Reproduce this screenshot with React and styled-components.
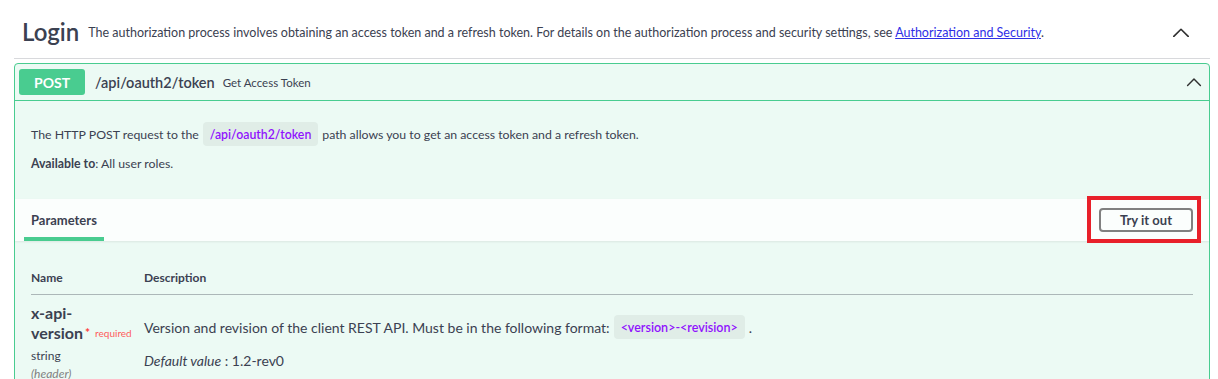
import React from "react";
import styled, { createGlobalStyle } from "styled-components";

const Global = createGlobalStyle`
  html, body { margin: 0; padding: 0; background: #fff; }
  body { font-family: Lato, "Noto Sans", sans-serif; color: #3b4151; }
  * { box-sizing: border-box; }
`;

const Section = styled.section`
  padding: 0 8px 0 14px;
`;

const TagHeader = styled.div`
  display: flex;
  align-items: center;
  padding: 15px 20px 9px 8px;
  border-bottom: 1px solid rgba(59, 65, 81, 0.2);
`;

const TagTitle = styled.h3`
  margin: 0;
  font-size: 24px;
  line-height: 34px;
  font-weight: 600;
  color: #3b4151;
`;

const TagDesc = styled.small`
  flex: 1;
  margin-left: 9px;
  font-size: 12.5px;
  color: #3b4151;
  white-space: nowrap;
  a { color: #2f2fe6; text-decoration: underline; }
`;

const Chevron = ({ size = 16 }) => (
  <svg width={size} height={size * 0.6} viewBox="0 0 20 12" fill="none">
    <path d="M2 10.5 L10 2.5 L18 10.5" stroke="#303030" strokeWidth="1.8" strokeLinecap="round" strokeLinejoin="round" />
  </svg>
);

const Opblock = styled.div`
  margin-top: 4px;
  border: 1px solid #49cc90;
  border-radius: 4px;
  background: rgba(73, 204, 144, 0.1);
`;

const Summary = styled.div`
  display: flex;
  align-items: center;
  padding: 5px 4px;
  border-bottom: 1px solid #49cc90;
`;

const Method = styled.span`
  display: inline-flex;
  align-items: center;
  justify-content: center;
  width: 66px;
  height: 26px;
  border-radius: 3px;
  background: #49cc90;
  color: #fff;
  font-size: 14px;
  font-weight: 700;
`;

const Path = styled.span`
  margin-left: 10px;
  font-size: 14.5px;
  font-weight: 600;
  color: #3b4151;
`;

const SummaryDesc = styled.span`
  flex: 1;
  margin-left: 8px;
  font-size: 11.5px;
  color: #3b4151;
`;

const SummaryArrow = styled.span`
  display: flex;
  margin-right: 3px;
`;

const Body = styled.div`
  padding: 21px 16px 27px;
  font-size: 12.3px;
`;

const Line = styled.p`
  margin: 0;
  display: flex;
  align-items: center;
  min-height: ${(p) => (p.$tall ? "24px" : "18px")};
  margin-top: ${(p) => (p.$gap ? "8px" : "0")};
  b { font-weight: 700; }
`;

const Code = styled.code`
  display: inline-flex;
  align-items: center;
  height: 24px;
  padding: 0 7px;
  margin: 0 4px;
  border-radius: 4px;
  background: rgba(0, 0, 0, 0.05);
  color: #9012fe;
  font-family: inherit;
  font-weight: 600;
  font-size: ${(p) => p.$size || "12.3px"};
`;

const ParamsHeader = styled.div`
  position: relative;
  display: flex;
  align-items: center;
  justify-content: space-between;
  height: 42px;
  padding: 0 16px 0 9px;
  background: rgba(255, 255, 255, 0.8);
  box-shadow: 0 1px 2px rgba(0, 0, 0, 0.08);
`;

const Tab = styled.div`
  align-self: stretch;
  display: flex;
  align-items: center;
  padding: 4px 7px 0;
  font-size: 13px;
  font-weight: 700;
  border-bottom: 4px solid #49cc90;
`;

const TryButton = styled.button`
  width: 94px;
  height: 24px;
  border: 2px solid #808080;
  border-radius: 4px;
  background: transparent;
  color: #3b4151;
  font-family: inherit;
  font-size: 13px;
  font-weight: 700;
  cursor: pointer;
`;

/* red annotation frame laid over the "Try it out" button */
const Highlight = styled.span`
  position: absolute;
  z-index: 2;
  top: -3px;
  right: 8px;
  width: 114px;
  height: 47px;
  border: 4px solid #e8202a;
  pointer-events: none;
`;

const TableWrap = styled.div`
  padding: 29px 16px 0;
`;

const Table = styled.table`
  width: 100%;
  border-collapse: collapse;
  th {
    text-align: left;
    font-size: 12px;
    font-weight: 700;
    padding: 0 0 9px;
    border-bottom: 1px solid rgba(59, 65, 81, 0.2);
  }
  td { vertical-align: top; padding: 0; }
`;

const NameCell = styled.td`
  width: 113px;
  padding-top: 8px !important;
`;

const ParamName = styled.div`
  font-size: 16px;
  font-weight: 700;
  line-height: 20px;
  span {
    font-size: 10px;
    font-weight: 400;
    color: #ff5b5b;
    margin-left: 2px;
    vertical-align: 2px;
  }
  span b { color: #ff3b3b; font-size: 12px; margin-right: 5px; }
`;

const ParamType = styled.div`
  font-size: 12px;
  line-height: 18px;
  margin-top: 4px;
`;

const ParamIn = styled.div`
  font-size: 12px;
  font-style: italic;
  color: #808080;
  line-height: 18px;
`;

const DescCell = styled.td`
  padding-top: 20px !important;
  font-size: 14px;
`;

const Default = styled.div`
  margin-top: 13px;
  i { font-style: italic; }
`;

export default function App() {
  return (
    <>
      <Global />
      <Section>
        <TagHeader>
          <TagTitle>Login</TagTitle>
          <TagDesc>
            The authorization process involves obtaining an access token and a refresh token. For details on the
            authorization process and security settings, see <a href="#">Authorization and Security</a>.
          </TagDesc>
          <Chevron size={18} />
        </TagHeader>
        <Opblock>
          <Summary>
            <Method>POST</Method>
            <Path>/api/oauth2/token</Path>
            <SummaryDesc>Get Access Token</SummaryDesc>
            <SummaryArrow>
              <Chevron size={16} />
            </SummaryArrow>
          </Summary>
          <Body>
            <Line $tall>
              The HTTP POST request to the <Code>/api/oauth2/token</Code> path allows you to get an access token and a
              refresh token.
            </Line>
            <Line $gap>
              <b>Available to</b>: All user roles.
            </Line>
          </Body>
          <ParamsHeader>
            <Tab>Parameters</Tab>
            <TryButton>Try it out</TryButton>
            <Highlight />
          </ParamsHeader>
          <TableWrap>
            <Table>
              <thead>
                <tr>
                  <th>Name</th>
                  <th>Description</th>
                </tr>
              </thead>
              <tbody>
                <tr>
                  <NameCell>
                    <ParamName>
                      x-api-version
                      <span>
                        <b>*</b>required
                      </span>
                    </ParamName>
                    <ParamType>string</ParamType>
                    <ParamIn>(header)</ParamIn>
                  </NameCell>
                  <DescCell>
                    <Line $tall>
                      Version and revision of the client REST API. Must be in the following format:
                      <Code $size="12.5px">&lt;version&gt;-&lt;revision&gt;</Code>.
                    </Line>
                    <Default>
                      <i>Default value</i> : 1.2-rev0
                    </Default>
                  </DescCell>
                </tr>
              </tbody>
            </Table>
          </TableWrap>
        </Opblock>
      </Section>
    </>
  );
}
